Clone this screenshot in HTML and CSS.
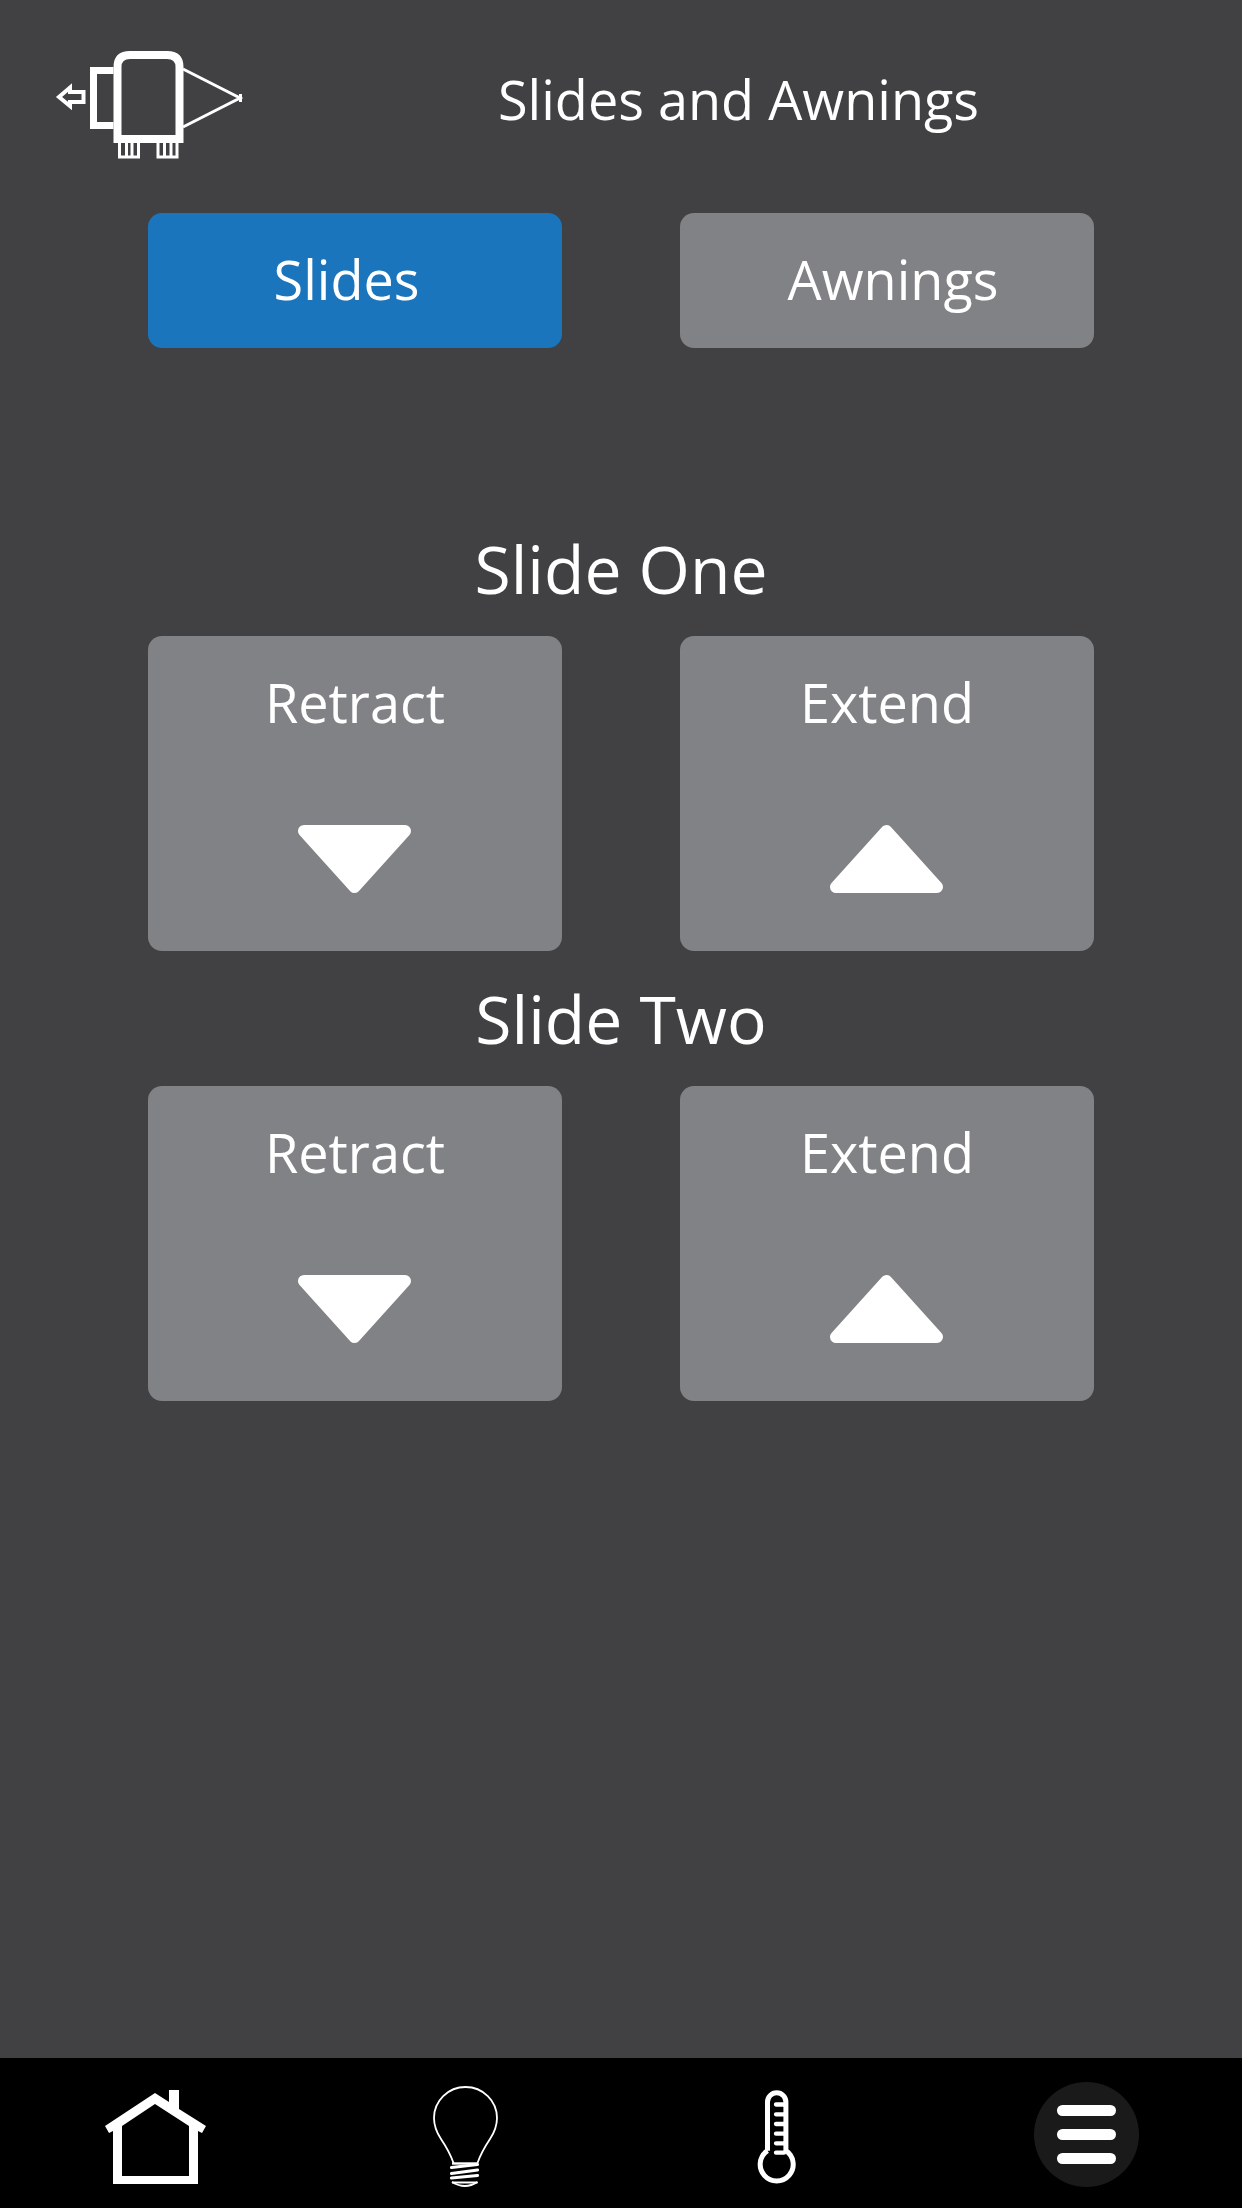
FILE: index.html
```html
<!DOCTYPE html>
<html lang="en">
<head>
<meta charset="utf-8">
<title>Slides and Awnings</title>
<link rel="stylesheet" href="styles.css">
</head>
<body>
<div class="page">
  <main class="main">
    <header class="header">
      <svg class="slide-icon" viewBox="0 0 240 150" fill="none" stroke="#fff">
        <path d="M53.500 62H40V57.500L29 67L40 76V72H53.500Z" stroke-width="4"/>
        <path d="M83.500 40.500H63.500V95.500H83.500" stroke-width="7"/>
        <path d="M87.500 109V37Q87.500 25 100 25H137Q149.500 25 149.500 37V109Z" stroke-width="8"/>
        <path d="M153 39L210 68L153 97M210.500 64V72" stroke-width="3"/>
        <path d="M89.500 113V127H108.500V113M96.500 113V127M102 113V127M128 113V127H147V113M134.500 113V127M141 113V127" stroke-width="3"/>
      </svg>
      <h1 class="title">Slides and Awnings</h1>
    </header>

    <div class="tabs">
      <button class="tab tab-slides active">Slides</button>
      <button class="tab tab-awnings">Awnings</button>
    </div>

    <section class="slide first">
      <h2 class="slide-name">Slide One</h2>
      <div class="controls">
        <div class="control">
          <span class="control-label">Retract</span>
          <svg class="arrow" viewBox="0 0 114 68"><path class="tri" d="M6 6H107L56.500 62Z"/></svg>
        </div>
        <div class="control">
          <span class="control-label">Extend</span>
          <svg class="arrow" viewBox="0 0 114 68"><path class="tri" d="M6 62H107L56.500 6Z"/></svg>
        </div>
      </div>
    </section>

    <section class="slide second">
      <h2 class="slide-name">Slide Two</h2>
      <div class="controls">
        <div class="control">
          <span class="control-label">Retract</span>
          <svg class="arrow" viewBox="0 0 114 68"><path class="tri" d="M6 6H107L56.500 62Z"/></svg>
        </div>
        <div class="control">
          <span class="control-label">Extend</span>
          <svg class="arrow" viewBox="0 0 114 68"><path class="tri" d="M6 62H107L56.500 6Z"/></svg>
        </div>
      </div>
    </section>
  </main>

  <nav class="nav">
    <svg class="nav-home" viewBox="0 0 110 100">
      <path fill="#fff" fill-rule="evenodd" d="M0 36L50 3L64 12V0H74V19L101 36L97 43L93 41V94H8V41L4 43ZM17 36V86H84V36L50 14Z"/>
    </svg>
    <svg class="nav-bulb" viewBox="0 0 70 106" fill="none" stroke="#fff">
      <path d="M21.500 78C18 68 13 60 9 54C5 48 2 42 2 33C2 16 16 2 33.500 2C51 2 65 16 65 33C65 42 62 48 58 54C54 60 49 68 45.500 78" stroke-width="1.800"/>
      <path d="M20 78.500H46" stroke-width="2.400"/>
      <path d="M19.500 82.500L45.500 79.500M19.500 88.500L45.500 85M19.500 93L45.500 90.500" stroke-width="3.200" stroke-linecap="round"/>
      <path d="M20 97.500H45.500" stroke-width="2"/>
      <path d="M20 97Q33 105 45.500 97" stroke-width="2"/>
    </svg>
    <svg class="nav-thermo" viewBox="0 0 60 110" fill="none" stroke="#fff">
      <path d="M22.500 65.700V17A9.200 9.200 0 0 1 40.900 17V65.700A16.500 16.500 0 1 1 22.500 65.700" stroke-width="5"/>
      <path d="M31 19.500H39M31 29.300H39M31 39H39M31 48.700H39M31 58.300H39M31 67.700H39" stroke-width="4.300" stroke-linecap="round"/>
    </svg>
    <div class="nav-menu">
      <span class="menu-bar"></span>
      <span class="menu-bar"></span>
      <span class="menu-bar"></span>
    </div>
  </nav>
</div>
</body>
</html>
```

FILE: styles.css
```css
* { box-sizing: border-box; }
html, body { margin: 0; padding: 0; }
body {
  width: 1242px;
  height: 2208px;
  background: #414042;
  color: #fff;
  font-family: "Open Sans", "Liberation Sans", sans-serif;
  overflow: hidden;
}
.page {
  display: flex;
  flex-direction: column;
  height: 2208px;
}
.main { flex: 1; }
.header {
  display: flex;
  height: 213px;
  align-items: flex-start;
}
.slide-icon {
  width: 240px;
  height: 150px;
  margin: 30px 0 0 30px;
  flex: none;
}
.title {
  margin: 63px 0 0 228px;
  font-size: 54px;
  line-height: 72px;
  font-weight: 400;
  white-space: nowrap;
}
.tabs, .controls {
  display: flex;
  gap: 118px;
  padding-left: 148px;
}
.tab {
  width: 414px;
  height: 135px;
  border: 0;
  border-radius: 14px;
  background: #808285;
  color: #fff;
  font: 400 54px/72px "Open Sans", "Liberation Sans", sans-serif;
}
.tab.active { background: #1b75bc; }
.tab-slides { padding: 0 17px 4px 0; }
.tab-awnings { padding: 0 0 4px 12px; }
.slide.first { margin-top: 154px; }
.slide.second { margin-top: 1px; }
.slide-name {
  margin: 0;
  height: 134px;
  padding-top: 24px;
  text-align: center;
  font-size: 66px;
  line-height: 84px;
  font-weight: 400;
}
.control {
  width: 414px;
  height: 315px;
  border-radius: 14px;
  background: #808285;
  display: flex;
  flex-direction: column;
  align-items: center;
  padding-top: 30px;
}
.control-label {
  font-size: 54px;
  font-weight: 400;
  line-height: 72px;
}
.arrow {
  width: 114px;
  height: 68px;
  margin-top: 87px;
}
.tri {
  fill: #fff;
  stroke: #fff;
  stroke-width: 12;
  stroke-linejoin: round;
}
.nav {
  height: 150px;
  background: #000;
  flex: none;
  display: flex;
  align-items: flex-start;
}
.nav-home { width: 110px; height: 100px; margin: 32px 0 0 105px; flex: none; }
.nav-bulb { width: 70px; height: 106px; margin: 27px 0 0 217px; flex: none; }
.nav-thermo { width: 60px; height: 110px; margin: 27px 0 0 243px; flex: none; }
.nav-menu {
  width: 105px;
  height: 105px;
  margin: 24px 0 0 229px;
  flex: none;
  border-radius: 50%;
  background: #1a1a1a;
  display: flex;
  flex-direction: column;
  align-items: center;
  justify-content: center;
  gap: 13px;
}
.menu-bar {
  width: 59px;
  height: 11px;
  border-radius: 6px;
  background: #fff;
}
```
